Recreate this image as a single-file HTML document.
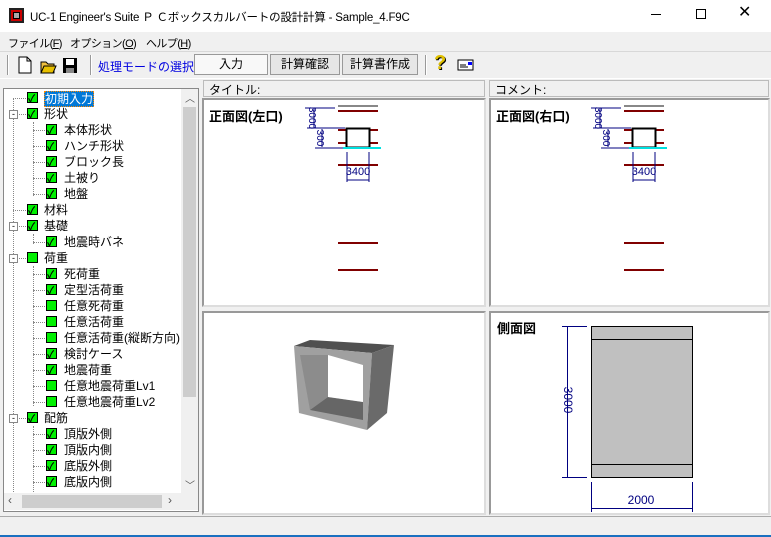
<!DOCTYPE html>
<html><head><meta charset="utf-8"><style>
*{margin:0;padding:0;box-sizing:border-box}
body{width:771px;height:537px;background:#f0f0f0;font-family:"Liberation Sans","Noto Sans CJK JP",sans-serif;font-size:12px;color:#000;position:relative;overflow:hidden}
.a{position:absolute;white-space:nowrap}
.t{position:absolute;white-space:nowrap;font-size:12px;line-height:14px}
.cb{position:absolute;width:11px;height:11px;background:#00f000;border:1px solid #000}
.btn{position:absolute;top:54px;height:21px;border:1px solid #999;background:#e6e6e6;text-align:center;line-height:19px;font-size:12px}
.m{font-size:11px;letter-spacing:-0.6px}
.dv{position:absolute;border-left:1px dotted #888;width:0}
.dh{position:absolute;border-top:1px dotted #888;height:0}
</style></head><body>
<div class="a" style="left:0;top:0;width:771px;height:32px;background:#fff"></div>
<div class="a" style="left:9px;top:8px;width:15px;height:15px;border:2px solid #222;background:#c00"><div style="margin:2px;width:7px;height:7px;background:#aaa;border:1px solid #000"></div></div>
<div class="a" style="left:30px;top:9px;font-size:11.5px;letter-spacing:-0.2px">UC-1 Engineer's Suite Ｐ Ｃボックスカルバートの設計計算 - Sample_4.F9C</div>
<div class="a" style="left:651px;top:14px;width:10px;height:1px;background:#000"></div>
<div class="a" style="left:696px;top:9px;width:10px;height:10px;border:1px solid #000"></div>
<div class="a" style="left:738px;top:3px;font-size:16px;line-height:20px">✕</div>
<div class="a m" style="left:8px;top:35px">ファイル(<u>F</u>)</div>
<div class="a m" style="left:70px;top:35px">オプション(<u>O</u>)</div>
<div class="a m" style="left:146px;top:35px">ヘルプ(<u>H</u>)</div>
<div class="a" style="left:0;top:51px;width:771px;height:1px;background:#d8d8d8"></div>
<div class="a" style="left:7px;top:55px;width:2px;height:20px;border-left:1px solid #999;border-right:1px solid #fff"></div>
<svg class="a" style="left:16px;top:56px" width="70" height="18"><path d="M3 1h8l4 4v12H3z" fill="#fff" stroke="#000"/><path d="M11 1v4h4" fill="none" stroke="#000"/>
<path d="M25 6h5l2 2h6v9H25z" fill="#f0c040" stroke="#000"/><path d="M28 10h12l-3 7H25z" fill="#e8c000" stroke="#000"/>
<rect x="47" y="2" width="14" height="15" fill="#000"/><rect x="50" y="3" width="8" height="6" fill="#fff"/><rect x="50" y="12" width="8" height="5" fill="#888"/></svg>
<div class="a" style="left:90px;top:55px;width:2px;height:20px;border-left:1px solid #999;border-right:1px solid #fff"></div>
<div class="a" style="left:98px;top:58px;color:#0000e0">処理モードの選択</div>
<div class="btn" style="left:194px;width:74px;background:#f8f8f8">入力</div>
<div class="btn" style="left:270px;width:70px">計算確認</div>
<div class="btn" style="left:342px;width:76px">計算書作成</div>
<div class="a" style="left:425px;top:55px;width:2px;height:20px;border-left:1px solid #999;border-right:1px solid #fff"></div>
<div class="a" style="left:434px;top:52px;font-size:20px;font-weight:bold;color:#e0c000;text-shadow:1px 1px 0 #000">?</div>
<svg class="a" style="left:457px;top:58px" width="18" height="14"><rect x="1" y="2" width="15" height="10" fill="#fff" stroke="#000"/><rect x="11" y="4" width="4" height="3" fill="#00f"/><path d="M3 7h6M3 9h8" stroke="#000"/></svg>
<div class="a" style="left:0;top:78px;width:771px;height:1px;background:#fff"></div>
<!-- tree -->
<div class="a" style="left:3px;top:88px;width:196px;height:424px;background:#fff;border:1px solid #888"></div>
<div class="dv" style="left:13px;top:98px;height:394px"></div>
<div class="dv" style="left:33px;top:122px;height:74px"></div>
<div class="dv" style="left:33px;top:234px;height:10px"></div>
<div class="dv" style="left:33px;top:266px;height:140px"></div>
<div class="dv" style="left:33px;top:426px;height:66px"></div>
<div id="tree"></div>
<div class="a" style="left:181px;top:89px;width:17px;height:404px;background:#f0f0f0"></div>
<div class="a" style="left:183px;top:107px;width:13px;height:290px;background:#cdcdcd"></div>
<div class="a" style="left:185px;top:90px;font-size:10px;color:#555">︿</div>
<div class="a" style="left:185px;top:477px;font-size:10px;color:#555">﹀</div>
<div class="a" style="left:4px;top:493px;width:194px;height:17px;background:#f0f0f0"></div>
<div class="a" style="left:22px;top:495px;width:140px;height:13px;background:#cdcdcd"></div>
<div class="a" style="left:8px;top:493px;color:#555">‹</div><div class="a" style="left:168px;top:493px;color:#555">›</div>
<!-- headers -->
<div class="a" style="left:203px;top:80px;width:282px;height:17px;border:1px solid #bbb;background:#f0f0f0"></div>
<div class="a" style="left:209px;top:81px">タイトル:</div>
<div class="a" style="left:489px;top:80px;width:280px;height:17px;border:1px solid #bbb;background:#f0f0f0"></div>
<div class="a" style="left:495px;top:81px">コメント:</div>
<div class="a" style="left:202px;top:98px;width:284px;height:209px;background:#fff;border:2px solid #999;border-right-color:#ddd;border-bottom-color:#ddd"></div>
<div class="a" style="left:489px;top:98px;width:281px;height:209px;background:#fff;border:2px solid #999;border-right-color:#ddd;border-bottom-color:#ddd"></div>
<div class="a" style="left:202px;top:311px;width:284px;height:204px;background:#fff;border:2px solid #999;border-right-color:#ddd;border-bottom-color:#ddd"></div>
<div class="a" style="left:489px;top:311px;width:281px;height:204px;background:#fff;border:2px solid #999;border-right-color:#ddd;border-bottom-color:#ddd"></div>
<div class="a" style="left:209px;top:106px;font-weight:bold;font-size:13px">正面図(左口)</div>
<div class="a" style="left:496px;top:106px;font-weight:bold;font-size:13px">正面図(右口)</div>
<div class="a" style="left:497px;top:318px;font-weight:bold;font-size:13px">側面図</div>
<svg class="a" style="left:0;top:0" width="771" height="537">
<g id="fr">
<path d="M338 106h40" stroke="#888" stroke-width="2"/>
<path d="M338 111h40M338 130h40M338 143h40M338 165h40M338 243h40M338 270h40" stroke="#800000" stroke-width="2"/>
<rect x="346.5" y="128.5" width="23" height="19" fill="#fff" stroke="#000" stroke-width="2"/>
<path d="M343 148h38" stroke="#00e0e0" stroke-width="2"/>
<path d="M305 108h30M314 108v20M307 128h38M322 129v18M315 148h28M347 152v30M369 152v30M347 180h22" stroke="#000080" stroke-width="1"/>
<text x="0" y="0" transform="translate(309,118) rotate(90)" font-size="10" fill="#000080" text-anchor="middle" font-family="Liberation Sans">3000</text>
<text x="0" y="0" transform="translate(317,138) rotate(90)" font-size="10" fill="#000080" text-anchor="middle" font-family="Liberation Sans">300</text>
<text x="358" y="175" font-size="11" fill="#000080" text-anchor="middle" font-family="Liberation Sans">3400</text>
</g>
<use href="#fr" transform="translate(286,0)"/>
<polygon points="294,346 310,340 394,345 372,353" fill="#505050"/>
<polygon points="294,346 372,353 367,430 299,413" fill="#a0a0a0"/>
<polygon points="372,353 394,345 387,413 367,430" fill="#6a6a6a"/>
<polygon points="300,355 328,355 328,397 310,410" fill="#8c8c8c"/>
<polygon points="310,410 328,397 363,402 363,420" fill="#666"/>
<polygon points="328,355 363,365 363,402 328,397" fill="#fff"/>
<rect x="591.5" y="326.5" width="101" height="151" fill="#c0c0c0" stroke="#000"/>
<path d="M591 339.5h101M591 464.5h101" stroke="#000"/>
<path d="M562 326.5h25M562 477.5h25M567.5 326v151M591.5 482v30M692.5 482v30M591 508.5h101" stroke="#000080"/>
<text transform="translate(564,400) rotate(90)" font-size="12" fill="#000080" text-anchor="middle" font-family="Liberation Sans">3000</text>
<text x="641" y="504" font-size="12" fill="#000080" text-anchor="middle" font-family="Liberation Sans">2000</text>
</svg>
<div class="a" style="left:0;top:516px;width:771px;height:1px;background:#aaa"></div>
<div class="a" style="left:0;top:535px;width:771px;height:2px;background:#1a70c0"></div>
<script>
var items=[[1,"初期入力",1,1],[1,"形状",1,0,1],[2,"本体形状",1],[2,"ハンチ形状",1],[2,"ブロック長",1],[2,"土被り",1],[2,"地盤",1],[1,"材料",1],[1,"基礎",1,0,1],[2,"地震時バネ",1],[1,"荷重",0,0,1],[2,"死荷重",1],[2,"定型活荷重",1],[2,"任意死荷重",0],[2,"任意活荷重",0],[2,"任意活荷重(縦断方向)",0],[2,"検討ケース",1],[2,"地震荷重",1],[2,"任意地震荷重Lv1",0],[2,"任意地震荷重Lv2",0],[1,"配筋",1,0,1],[2,"頂版外側",1],[2,"頂版内側",1],[2,"底版外側",1],[2,"底版内側",1]];
var h="";items.forEach(function(it,i){var y=91+i*16;var cx=it[0]==1?27:46;var tx=it[0]==1?44:64;
h+='<div class="dh" style="left:'+(it[0]==1?13:33)+'px;top:'+(y+7)+'px;width:'+(it[0]==1?13:12)+'px"></div>';
if(it[4])h+='<div class="a" style="left:9px;top:'+(y+3)+'px;width:9px;height:9px;border:1px solid #888;background:#fff;font-size:9px;line-height:6px;text-align:center">-</div>';
h+='<div class="cb" style="left:'+cx+'px;top:'+(y+1)+'px">'+(it[2]?'<span style="position:absolute;left:0;top:-3px;font-size:10px;font-weight:bold">✓</span>':'')+'</div>';
h+='<div class="t" style="left:'+tx+'px;top:'+y+'px;'+(it[3]?'background:#0078d7;color:#fff;border:1px dotted #f80':'')+'">'+it[1]+'</div>';});
document.getElementById("tree").innerHTML=h;
</script>
</body></html>
